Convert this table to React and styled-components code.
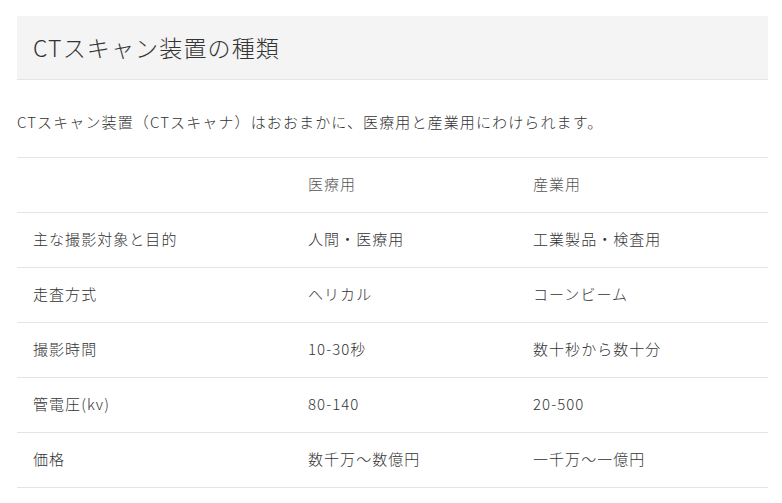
import React from "react";
import styled, { createGlobalStyle } from "styled-components";

const Global = createGlobalStyle`
  html, body { margin: 0; padding: 0; background: #fff; }
  body {
    font-family: "Noto Sans CJK JP", "Noto Sans", sans-serif;
    color: #333;
  }
`;

const Page = styled.div`
  padding: 16px 14px 0 17px;
`;

const Heading = styled.h2`
  margin: 0;
  height: 63px;
  display: flex;
  align-items: center;
  padding: 0 16px 2px;
  box-sizing: border-box;
  height: 64px;
  background: #f4f4f4;
  border-bottom: 1px solid #e4e4e4;
  font-size: 23px;
  font-weight: 300;
  letter-spacing: 0.05em;
  color: #333;
`;

const Lead = styled.p`
  margin: 30px 0 23px;
  font-size: 15px;
  font-weight: 300;
  line-height: 24px;
  letter-spacing: 0.075em;
  color: #333;
`;

const Table = styled.table`
  width: 100%;
  border-collapse: collapse;
  table-layout: fixed;
  border-top: 1px solid #e4e4e4;
`;

const Row = styled.tr`
  border-bottom: 1px solid #e4e4e4;
`;

const Cell = styled.td`
  height: 55px;
  padding: 0 16px 4px;
  font-size: 15px;
  font-weight: 300;
  letter-spacing: 0.07em;
  color: ${(p) => (p.$head ? "#555" : "#333")};
  vertical-align: middle;
  box-sizing: border-box;
`;

const rows = [
  ["主な撮影対象と目的", "人間・医療用", "工業製品・検査用"],
  ["走査方式", "ヘリカル", "コーンビーム"],
  ["撮影時間", "10-30秒", "数十秒から数十分"],
  ["管電圧(kv)", "80-140", "20-500"],
  ["価格", "数千万～数億円", "一千万～一億円"],
];

export default function App() {
  return (
    <>
      <Global />
      <Page>
        <Heading>CTスキャン装置の種類</Heading>
        <Lead>CTスキャン装置（CTスキャナ）はおおまかに、医療用と産業用にわけられます。</Lead>
        <Table>
          <colgroup>
            <col style={{ width: "275px" }} />
            <col style={{ width: "225px" }} />
            <col />
          </colgroup>
          <tbody>
            <Row>
              <Cell $head></Cell>
              <Cell $head>医療用</Cell>
              <Cell $head>産業用</Cell>
            </Row>
            {rows.map((r) => (
              <Row key={r[0]}>
                {r.map((c, i) => (
                  <Cell key={i}>{c}</Cell>
                ))}
              </Row>
            ))}
          </tbody>
        </Table>
      </Page>
    </>
  );
}
